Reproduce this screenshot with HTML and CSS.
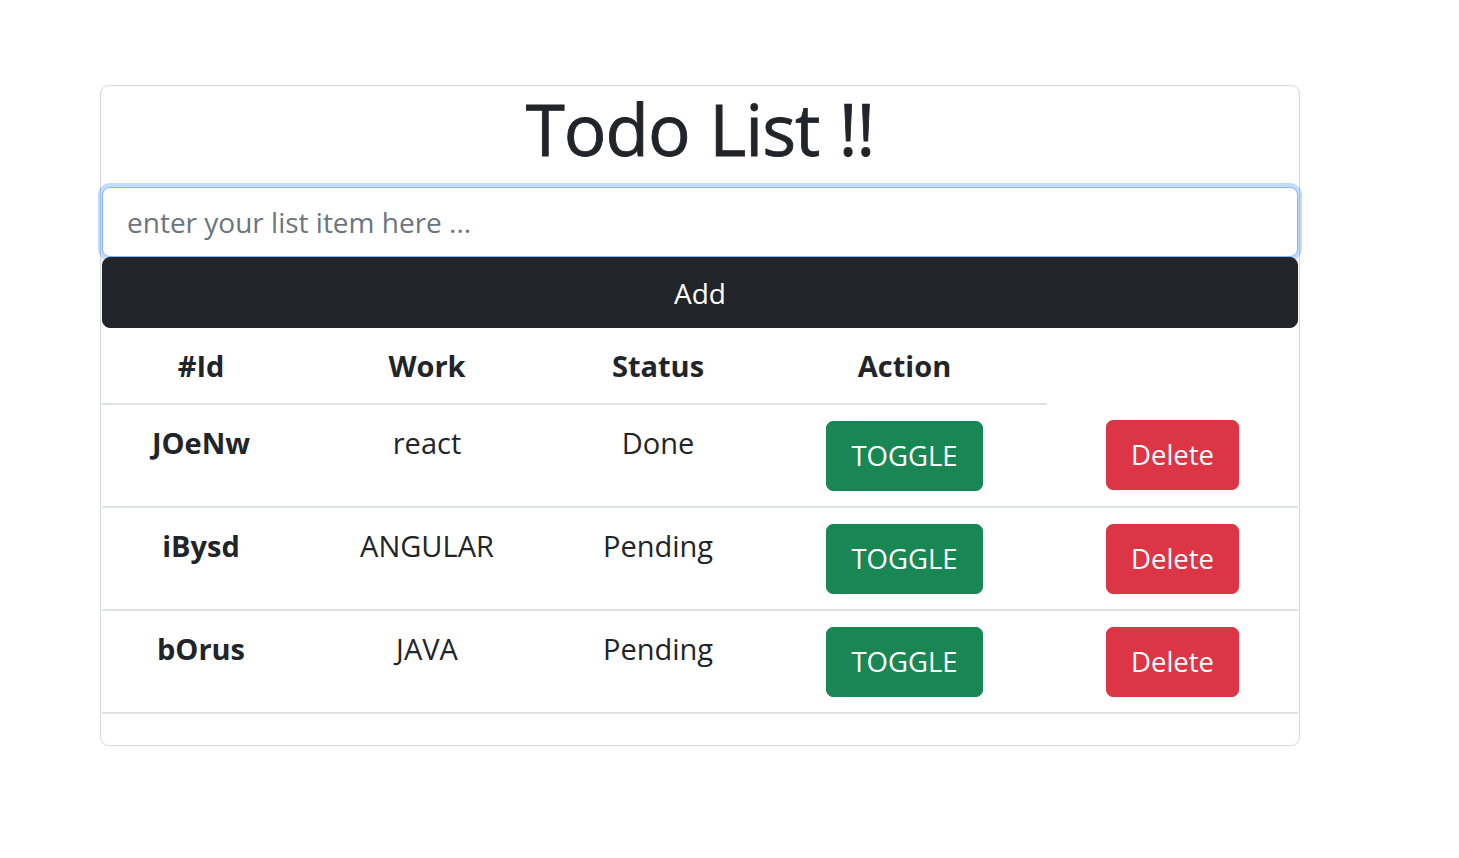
FILE: index.html
```html
<!DOCTYPE html>
<html lang="en">
<head>
<meta charset="utf-8">
<title>Todo List</title>
<link rel="stylesheet" href="styles.css">
</head>
<body>
<div class="page">
  <div class="card">
    <h1 class="title">Todo List !!</h1>
    <div class="form">
      <input class="field is-focused" type="text" placeholder="enter your list item here ...">
      <button class="btn btn-dark btn-block">Add</button>
    </div>
    <table class="table">
      <colgroup>
        <col class="c-id"><col class="c-work"><col class="c-status"><col class="c-action"><col class="c-delete">
      </colgroup>
      <thead>
        <tr><th>#Id</th><th>Work</th><th>Status</th><th>Action</th></tr>
      </thead>
      <tbody>
        <tr>
          <th>JOeNw</th><td>react</td><td>Done</td>
          <td><button class="btn btn-success">TOGGLE</button></td>
          <td><button class="btn btn-danger">Delete</button></td>
        </tr>
        <tr>
          <th>iBysd</th><td>ANGULAR</td><td>Pending</td>
          <td><button class="btn btn-success">TOGGLE</button></td>
          <td><button class="btn btn-danger">Delete</button></td>
        </tr>
        <tr>
          <th>bOrus</th><td>JAVA</td><td>Pending</td>
          <td><button class="btn btn-success">TOGGLE</button></td>
          <td><button class="btn btn-danger">Delete</button></td>
        </tr>
      </tbody>
    </table>
  </div>
</div>
</body>
</html>
```

FILE: styles.css
```css
* { box-sizing: border-box; }
html, body { margin: 0; padding: 0; background: #fff; }
body {
  font-family: "Open Sans", "Noto Sans", sans-serif;
  color: #212529;
}
.page {
  padding: 85px 0 0 100px;
}
.card {
  width: 1200px;
  border: 1px solid #d6d6d6;
  border-radius: 9px;
  padding: 0 0 31px;
}
.title {
  margin: 0;
  font-size: 71px;
  line-height: 86px;
  font-weight: 500;
  letter-spacing: -1px;
  word-spacing: 2px;
  text-align: center;
  -webkit-text-stroke: 0.8px #212529;
}
.form {
  margin-top: 15px;
  padding: 0 0 0 1px;
  display: flex;
  flex-direction: column;
}
.field {
  display: block;
  width: 1196px;
  height: 70px;
  padding: 12px 24px;
  font-family: inherit;
  font-size: 28px;
  color: #212529;
  border: 1px solid #ced4da;
  border-radius: 8px;
  outline: none;
  background: #fff;
}
.field::placeholder { color: #6c757d; }
.field.is-focused {
  border-color: #86b7fe;
  box-shadow: 0 0 0 4px rgba(13, 110, 253, .25);
}
.btn {
  display: inline-block;
  font-family: inherit;
  font-size: 27.5px;
  line-height: 44px;
  padding: 12px 24px;
  border: 1px solid transparent;
  border-radius: 7px;
  color: #fff;
  cursor: pointer;
}
.btn-dark { background: #212529; border-color: #212529; }
.btn-success { background: #198754; border-color: #198754; }
.btn-danger { background: #dc3545; border-color: #dc3545; }
.btn-block {
  width: 1196px;
  height: 71px;
  border-radius: 8px;
  padding: 12px 0;
  font-size: 28px;
}
.table {
  margin-left: 1px;
  width: 1196px;
  table-layout: fixed;
  border-collapse: collapse;
  font-size: 29px;
  line-height: 44px;
}
.c-id { width: 198px; }
.c-work { width: 254px; }
.c-status { width: 208px; }
.c-action { width: 285px; }
.c-delete { width: 251px; }
.table th, .table td {
  padding: 16px 8px 15px;
  text-align: center;
  vertical-align: top;
  border-bottom: 2px solid #dee2e6;
}
.table th { font-weight: 700; }
.table td { font-weight: 400; }
```
